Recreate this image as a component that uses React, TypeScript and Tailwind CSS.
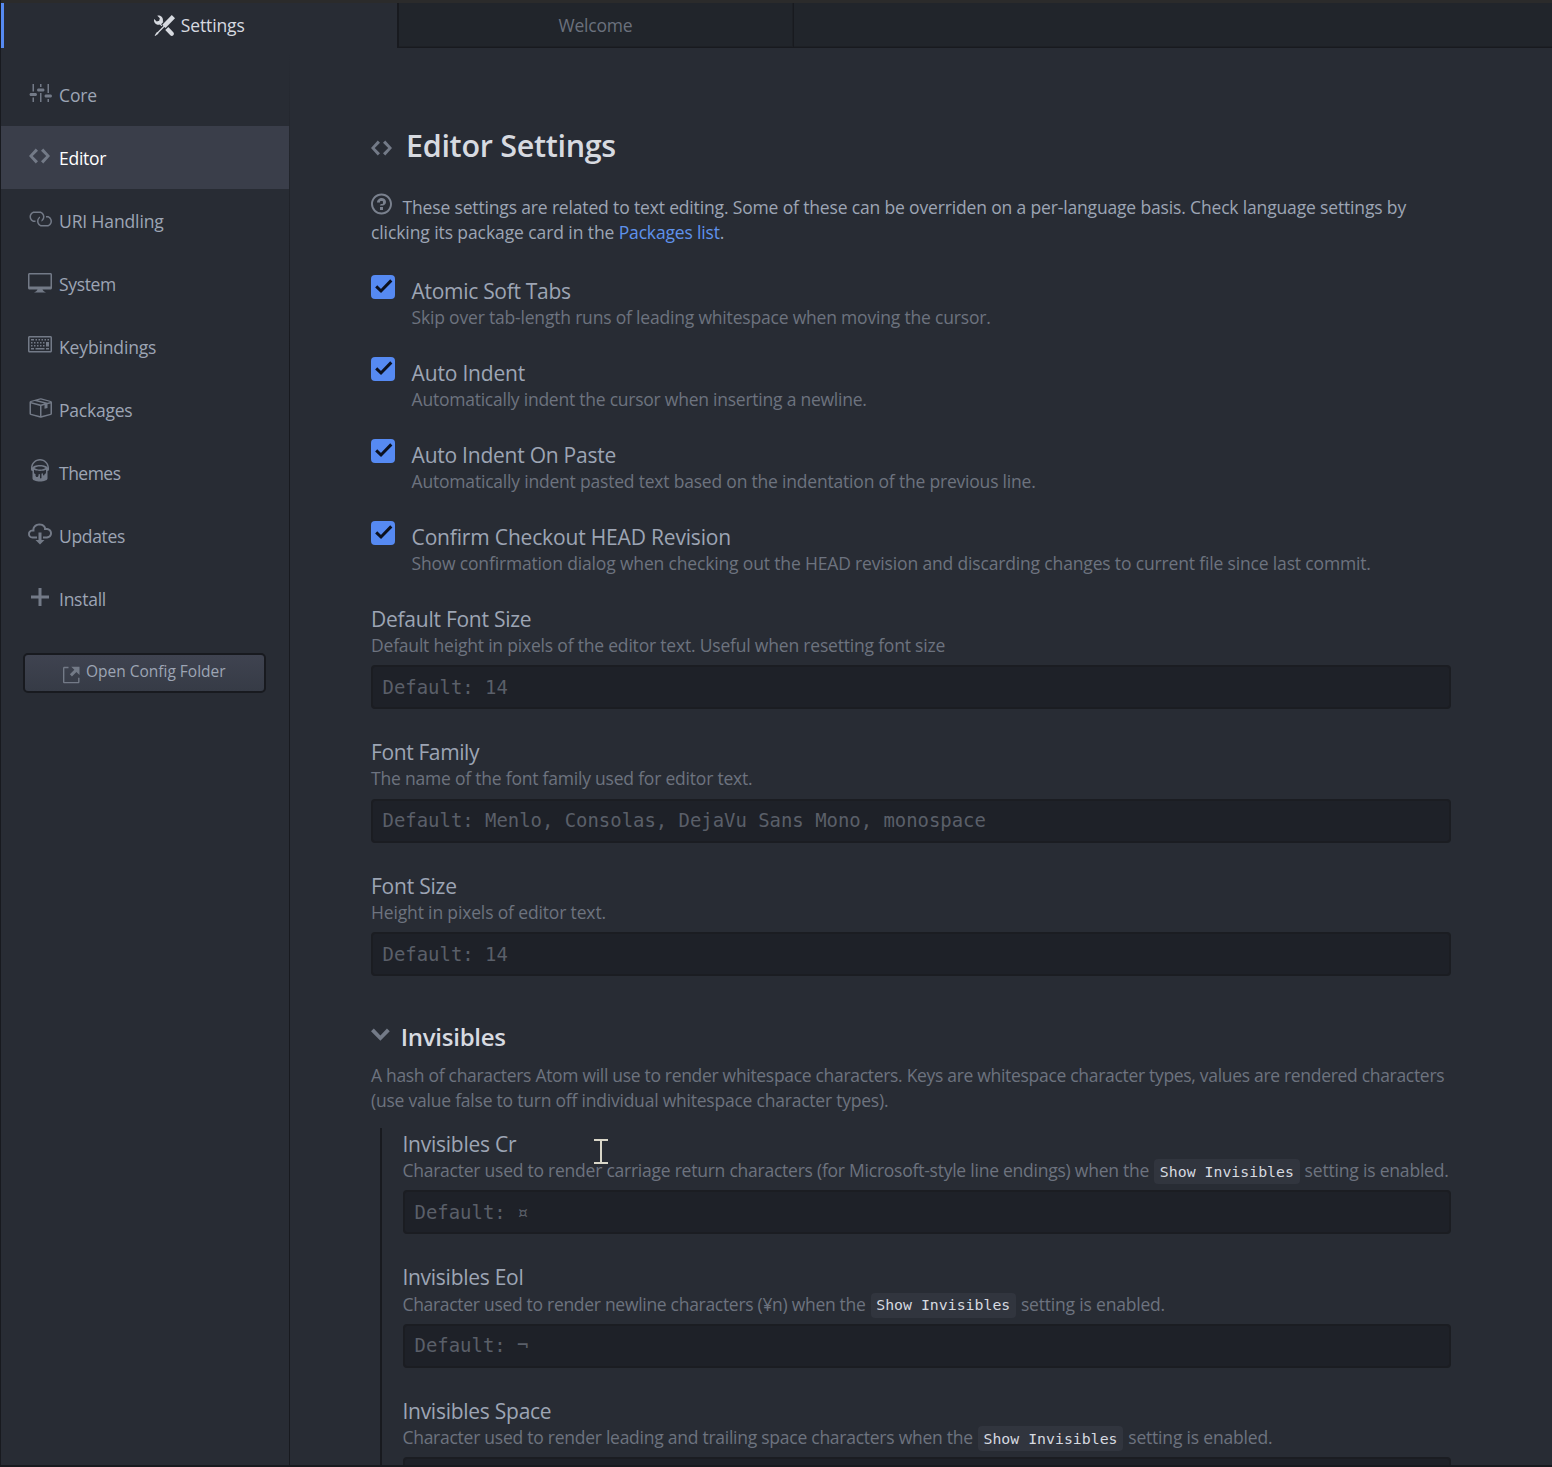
type IconShape = { width: number; d: string };

const icons: Record<string, IconShape> = {
  tools: {
    width: 16,
    d: 'M4.48 7.27c.26.26 1.28 1.33 1.28 1.33l.56-.58-.88-.91 1.69-1.8s-.76-.74-.43-.45c.32-1.19.03-2.51-.87-3.44C4.93.5 3.66.2 2.52.51l1.93 2-.51 1.96-1.89.52-1.93-1.99C-.19 4.17.1 5.48 1 6.4c.94.98 2.29 1.26 3.48.87zm6.44 1.94l-2.33 2.3 3.84 3.98c.31.33.73.49 1.14.49.41 0 .82-.16 1.14-.49.63-.65.63-1.7 0-2.35l-3.79-3.93zM16 2.53L13.55 0 6.33 7.46l.88.91-4.31 4.46-.99.53-1.39 2.27.35.37 2.2-1.44.51-1.02L7.9 9.08l.88.91L16 2.53z',
  },
  settings: {
    width: 16,
    d: 'M4 7H3V2h1v5zm-1 7h1v-3H3v3zm5 0h1V8H8v6zm5 0h1v-2h-1v2zm1-12h-1v6h1V2zM9 2H8v2h1V2zM5 8H2c-.55 0-1 .45-1 1s.45 1 1 1h3c.55 0 1-.45 1-1s-.45-1-1-1zm5-3H7c-.55 0-1 .45-1 1s.45 1 1 1h3c.55 0 1-.45 1-1s-.45-1-1-1zm5 4h-3c-.55 0-1 .45-1 1s.45 1 1 1h3c.55 0 1-.45 1-1s-.45-1-1-1z',
  },
  code: {
    width: 14,
    d: 'M9.5 3L8 4.5 11.5 8 8 11.5 9.5 13 14 8 9.5 3zm-5 0L0 8l4.5 5L6 11.5 2.5 8 6 4.5 4.5 3z',
  },
  link: {
    width: 16,
    d: 'M4 9h1v1H4c-1.5 0-3-1.69-3-3.5S2.55 3 4 3h4c1.45 0 3 1.69 3 3.5 0 1.41-.91 2.72-2 3.25V8.59c.58-.45 1-1.27 1-2.09C10 5.22 8.98 4 8 4H4c-.98 0-2 1.22-2 2.5S3 9 4 9zm9-3h-1v1h1c1 0 2 1.22 2 2.5S13.98 12 13 12H9c-.98 0-2-1.22-2-2.5 0-.83.42-1.64 1-2.09V6.25c-1.09.53-2 1.84-2 3.25C6 11.31 7.55 13 9 13h4c1.45 0 3-1.69 3-3.5S14.5 6 13 6z',
  },
  desktop: {
    width: 16,
    d: 'M15 2H1c-.55 0-1 .45-1 1v9c0 .55.45 1 1 1h5.34c-.25.61-.86 1.39-2.34 2h8c-1.48-.61-2.09-1.39-2.34-2H15c.55 0 1-.45 1-1V3c0-.55-.45-1-1-1zm0 9H1V3h14v8z',
  },
  keyboard: {
    width: 16,
    d: 'M10 5H9V4h1v1zM3 6H2v1h1V6zm5-2H7v1h1V4zM4 4H2v1h2V4zm8 7h2v-1h-2v1zM8 7h1V6H8v1zm-4 3H2v1h2v-1zm8-6h-1v1h1V4zm2 0h-1v1h1V4zm-2 5h2V6h-2v3zm4-6v9c0 .55-.45 1-1 1H1c-.55 0-1-.45-1-1V3c0-.55.45-1 1-1h14c.55 0 1 .45 1 1zm-1 0H1v9h14V3zM6 7h1V6H6v1zm0-3H5v1h1V4zM4 7h1V6H4v1zm1 4h6v-1H5v1zm5-4h1V6h-1v1zM3 8H2v1h1V8zm5 0v1h1V8H8zM6 8v1h1V8H6zM5 8H4v1h1V8zm5 1h1V8h-1v1z',
  },
  package: {
    width: 16,
    d: 'M1 4.27v7.47c0 .45.3.84.75.97l6.5 1.73c.16.05.34.05.5 0l6.5-1.73c.45-.13.75-.52.75-.97V4.27c0-.45-.3-.84-.75-.97l-6.5-1.74a1.4 1.4 0 0 0-.5 0L1.75 3.3c-.45.13-.75.52-.75.97zm7 9.09l-6-1.59V5l6 1.61v6.75zM2 4l2.5-.67L11 5.06l-2.5.67L2 4zm13 7.77l-6 1.59V6.61l2-.55V8.5l2-.53V5.53L15 5v6.77zm-2-7.24L6.5 2.8l2-.53L15 4l-2 .53z',
  },
  paintcan: {
    width: 12,
    d: 'M6 0C2.69 0 0 2.69 0 6v1c0 .55.45 1 1 1v5c0 1.1 2.24 2 5 2s5-.9 5-2V8c.55 0 1-.45 1-1V6c0-3.31-2.69-6-6-6zm3 10v.5c0 .28-.22.5-.5.5s-.5-.22-.5-.5V10c0-.28-.22-.5-.5-.5s-.5.22-.5.5v2.5c0 .28-.22.5-.5.5s-.5-.22-.5-.5v-2c0-.28-.22-.5-.5-.5s-.5.22-.5.5v.5c0 .55-.45 1-1 1s-1-.45-1-1v-1c-.55 0-1-.45-1-1V7.2c.91.49 2.36.8 4 .8 1.64 0 3.09-.31 4-.8V9c0 .55-.45 1-1 1zM6 7c-1.68 0-3.12-.41-3.71-1C2.88 5.41 4.32 5 6 5c1.68 0 3.12.41 3.71 1-.59.59-2.03 1-3.71 1zm0-3c-2.76 0-5 .89-5 2 0-2.76 2.24-5 5-5s5 2.24 5 5c0-1.1-2.24-2-5-2z',
  },
  cloud: {
    width: 16,
    d: 'M9 12h2l-3 3-3-3h2V7h2v5zm3-8c0-.44-.91-3-4.5-3C5.08 1 3 2.92 3 5 1.02 5 0 6.52 0 8c0 1.53 1 3 3 3h3V9.7H3C1.38 9.7 1.3 8.28 1.3 8c0-.17.05-1.7 1.7-1.7h1.3V5c0-1.39 1.56-2.7 3.2-2.7 2.55 0 3.13 1.55 3.2 1.8v1.2H12c.81 0 2.7.22 2.7 2.2 0 2.09-2.25 2.2-2.7 2.2h-2V11h2c2.08 0 4-1.16 4-3.5C16 5.06 14.08 4 12 4z',
  },
  plus: { width: 12, d: 'M12 9H7v5H5V9H0V7h5V2h2v5h5v2z' },
  external: {
    width: 12,
    d: 'M11 10h1v3c0 .55-.45 1-1 1H1c-.55 0-1-.45-1-1V3c0-.55.45-1 1-1h3v1H1v10h10v-3zM6 2l2.25 2.25L5 7.5 6.5 9l3.25-3.25L12 8V2H6z',
  },
  question: {
    width: 14,
    d: 'M6 10h2v2H6v-2zm4-3.5C10 8.64 8 9 8 9H6c0-.55.45-1 1-1h.5c.28 0 .5-.22.5-.5v-1c0-.28-.22-.5-.5-.5h-1c-.28 0-.5.22-.5.5V7H4c0-1.5 1.5-3 3-3s3 1 3 2.5zM7 2.3c3.14 0 5.7 2.56 5.7 5.7s-2.56 5.7-5.7 5.7A5.71 5.71 0 0 1 1.3 8c0-3.14 2.56-5.7 5.7-5.7zM7 1C3.14 1 0 4.14 0 8s3.14 7 7 7 7-3.14 7-7-3.14-7-7-7z',
  },
  chevron: { width: 10, d: 'M5 11L0 6l1.5-1.5L5 8.25 8.5 4.5 10 6l-5 5z' },
};

function Icon({ name, className }: { name: string; className: string }) {
  const { width, d } = icons[name];
  return (
    <svg viewBox={`0 0 ${width} 16`} fill="currentColor" className={`w-auto shrink-0 ${className}`} aria-hidden="true">
      <path fillRule="evenodd" d={d} />
    </svg>
  );
}

const navItems = [
  { label: 'Core', icon: 'settings', tracking: 'tracking-[-0.13px]' },
  { label: 'Editor', icon: 'code', tracking: 'tracking-[-0.25px]', active: true },
  { label: 'URI Handling', icon: 'link', tracking: 'tracking-[-0.12px]' },
  { label: 'System', icon: 'desktop', tracking: 'tracking-[-0.33px]' },
  { label: 'Keybindings', icon: 'keyboard', tracking: 'tracking-[-0.14px]' },
  { label: 'Packages', icon: 'package', tracking: 'tracking-[-0.22px]' },
  { label: 'Themes', icon: 'paintcan', tracking: 'tracking-[-0.51px]' },
  { label: 'Updates', icon: 'cloud', tracking: 'tracking-[-0.33px]' },
  { label: 'Install', icon: 'plus', tracking: 'tracking-[-0.25px]' },
];

const toggles = [
  {
    label: 'Atomic Soft Tabs',
    labelTracking: 'tracking-[-0.3px]',
    text: 'Skip over tab-length runs of leading whitespace when moving the cursor.',
    tracking: 'tracking-[-0.19px]',
  },
  {
    label: 'Auto Indent',
    labelTracking: 'tracking-[-0.18px]',
    text: 'Automatically indent the cursor when inserting a newline.',
    tracking: 'tracking-[-0.235px]',
  },
  {
    label: 'Auto Indent On Paste',
    labelTracking: 'tracking-[-0.24px]',
    text: 'Automatically indent pasted text based on the indentation of the previous line.',
    tracking: 'tracking-[-0.2px]',
  },
  {
    label: 'Confirm Checkout HEAD Revision',
    labelTracking: 'tracking-[-0.17px]',
    text: 'Show confirmation dialog when checking out the HEAD revision and discarding changes to current file since last commit.',
    tracking: 'tracking-[-0.158px]',
  },
];

const fields = [
  {
    label: 'Default Font Size',
    labelTracking: 'tracking-[-0.25px]',
    text: 'Default height in pixels of the editor text. Useful when resetting font size',
    tracking: 'tracking-[-0.195px]',
    placeholder: 'Default: 14',
  },
  {
    label: 'Font Family',
    labelTracking: 'tracking-[-0.38px]',
    text: 'The name of the font family used for editor text.',
    tracking: 'tracking-[-0.21px]',
    placeholder: 'Default: Menlo, Consolas, DejaVu Sans Mono, monospace',
  },
  {
    label: 'Font Size',
    labelTracking: 'tracking-[-0.22px]',
    text: 'Height in pixels of editor text.',
    tracking: 'tracking-[-0.15px]',
    placeholder: 'Default: 14',
  },
];

const invisibles = [
  {
    label: 'Invisibles Cr',
    labelTracking: 'tracking-[-0.24px]',
    text: 'Character used to render carriage return characters (for Microsoft-style line endings) when the',
    tracking: 'tracking-[-0.237px]',
    placeholder: 'Default: ¤',
  },
  {
    label: 'Invisibles Eol',
    labelTracking: 'tracking-[-0.27px]',
    text: 'Character used to render newline characters (¥n) when the',
    tracking: 'tracking-[-0.296px]',
    placeholder: 'Default: ¬',
  },
  {
    label: 'Invisibles Space',
    labelTracking: 'tracking-[-0.26px]',
    text: 'Character used to render leading and trailing space characters when the',
    tracking: 'tracking-[-0.256px]',
    placeholder: '',
  },
];

function Label({ text, tracking }: { text: string; tracking: string }) {
  return <div className={`h-7 text-[21px] leading-7 text-[#9da5b4] ${tracking}`}>{text}</div>;
}

function Placeholder({ text }: { text: string }) {
  return (
    <div className="mt-[7.2px] flex h-11 items-center rounded-[4px] border-2 border-[#1b1d22] bg-[#1e2128] pl-[9.6px] font-['DejaVu_Sans_Mono',monospace] text-[18.91px] whitespace-pre text-[#5a5f69]">
      {text}
    </div>
  );
}

export default function App() {
  return (
    <div className="relative flex h-[1467px] w-[1552px] flex-col overflow-hidden border-b-2 border-l border-[#181a1f] bg-[#282c34] font-['Open_Sans',sans-serif] text-[17.5px] leading-[25px] whitespace-nowrap text-[#9da5b4]">
      <div className="h-[3px] shrink-0 bg-[#2b2b2b]" />

      <div className="flex h-[45px] shrink-0">
        <div className="flex w-[396px] items-center justify-center gap-[5.5px] border-l-[3px] border-[#568af2] pr-[2px] text-[#d7dae0]">
          <Icon name="tools" className="-mt-px h-[21px]" />
          <span className="tracking-[-0.13px]">Settings</span>
        </div>
        <div className="flex w-[396px] items-center justify-center border-b border-l-2 border-[#181a1f] bg-[#21252b] pr-px text-[#6b717d] shadow-[inset_-1px_-1px_0_#1d2025]">
          <span className="pt-px tracking-[-0.19px]">Welcome</span>
        </div>
        <div className="flex-1 border-b border-l border-[#181a1f] bg-[#21252b] shadow-[inset_0_-1px_0_#1d2025]" />
      </div>

      <div className="flex min-h-0 flex-1">
        <nav className="w-72 shrink-0 pt-[15px]">
          {navItems.map((item) => (
            <div
              key={item.label}
              className={`flex h-[63px] items-center pl-[26px] ${item.active ? 'bg-[#3a3e4a] text-white' : ''}`}
            >
              <span className="mb-[4px] flex w-[25px] justify-center text-[#737a87]">
                <Icon name={item.icon} className="h-6" />
              </span>
              <span className={`ml-[7px] pt-[2px] ${item.tracking}`}>{item.label}</span>
            </div>
          ))}
          <button className="mt-[23px] ml-[22px] flex h-10 w-[243px] items-center justify-center rounded-[5px] border-2 border-[#181a1f] bg-linear-to-b from-[#3f4350] to-[#363b46] pb-[4px]">
            <Icon name="external" className="mt-[7px] h-[22px] text-[#737a87]" />
            <span className="ml-1.5 text-[15.5px] leading-6">Open Config Folder</span>
          </button>
        </nav>
        <div className="w-px shrink-0 bg-linear-to-b from-[#282c34] to-[#181a1f] to-[300px]" />

        <main className="ml-[81px] w-[1080px] pt-[77px]">
          <h1 className="flex h-10 items-center text-[30.5px] leading-10 font-semibold tracking-[-0.3px] text-[#d7dae0]">
            <Icon name="code" className="mt-[6px] mr-[14px] h-6 text-[#737a87]" />
            Editor Settings
          </h1>
          <div className="mt-[30px] h-[50px]">
            <div className="flex">
              <Icon name="question" className="-mt-[3px] mr-[10.5px] h-6 text-[#7a818e]" />
              <span className="tracking-[-0.156px]">
                These settings are related to text editing. Some of these can be overriden on a per-language basis. Check
                language settings by
              </span>
            </div>
            <p className="tracking-[-0.09px]">
              clicking its package card in the <a className="tracking-[-0.168px] text-[#5f92ec]">Packages list</a>.
            </p>
          </div>

          <div className="mt-8">
            {toggles.map((t) => (
              <div key={t.label} className="flex h-[82px]">
                <span className="-mt-[2px] flex size-6 items-center justify-center rounded-[4px] bg-[#568af2]">
                  <svg viewBox="0 0 24 24" className="size-6" fill="none" stroke="#0c111f" strokeWidth="3">
                    <path d="M5.2 11.4 10 16 20.3 5.4" />
                  </svg>
                </span>
                <div className="ml-[16.6px]">
                  <Label text={t.label} tracking={t.labelTracking} />
                  <p className={`text-[#6d737f] ${t.tracking}`}>{t.text}</p>
                </div>
              </div>
            ))}
          </div>

          <div className="-mt-[0.1px]">
            {fields.map((f) => (
              <div key={f.label} className="h-[133.5px]">
                <Label text={f.label} tracking={f.labelTracking} />
                <p className={`text-[#6d737f] ${f.tracking}`}>{f.text}</p>
                <Placeholder text={f.placeholder} />
              </div>
            ))}
          </div>

          <h2 className="mt-[15.1px] flex h-8 text-[24px] leading-8 font-semibold tracking-[-0.26px] text-[#d7dae0]">
            <Icon name="chevron" className="-mt-[1px] mr-[11px] h-[30px] text-[#737a87]" />
            Invisibles
          </h2>
          <div className="mt-[10px] text-[#6d737f]">
            <p className="tracking-[-0.308px]">
              A hash of characters Atom will use to render whitespace characters. Keys are whitespace character types,
              values are rendered characters
            </p>
            <p className="tracking-[-0.22px]">(use value false to turn off individual whitespace character types).</p>
          </div>

          <div className="mt-[15px] ml-[9px] border-l-2 border-[#181a1f] pt-[2.4px] pl-[21px]">
            {invisibles.map((f) => (
              <div key={f.label} className="h-[133.5px]">
                <div className="-ml-[0.6px]">
                  <Label text={f.label} tracking={f.labelTracking} />
                  <p className="flex h-[25.3px] items-center text-[#6d737f]">
                    <span className={f.tracking}>{f.text}</span>
                    <code className="mt-[2px] ml-[5px] flex h-[25px] items-center rounded-[4px] bg-[#31353e] px-[5.7px] pt-[1.5px] font-['DejaVu_Sans_Mono',monospace] text-[14.85px] text-[#d7dae0]">
                      Show Invisibles
                    </code>
                    <span className="ml-[5px] tracking-[-0.19px]">setting is enabled.</span>
                  </p>
                </div>
                <Placeholder text={f.placeholder} />
              </div>
            ))}
          </div>
        </main>
      </div>

      {/* Text cursor hovering over the page */}
      <svg viewBox="0 0 14 25" className="absolute top-[1139px] left-[593px] h-[25px] w-3.5" fill="#d9d6c8" shapeRendering="crispEdges">
        <path d="M0 0h14v2H8v21h6v2H0v-2h6V2H0z" />
      </svg>
    </div>
  );
}
